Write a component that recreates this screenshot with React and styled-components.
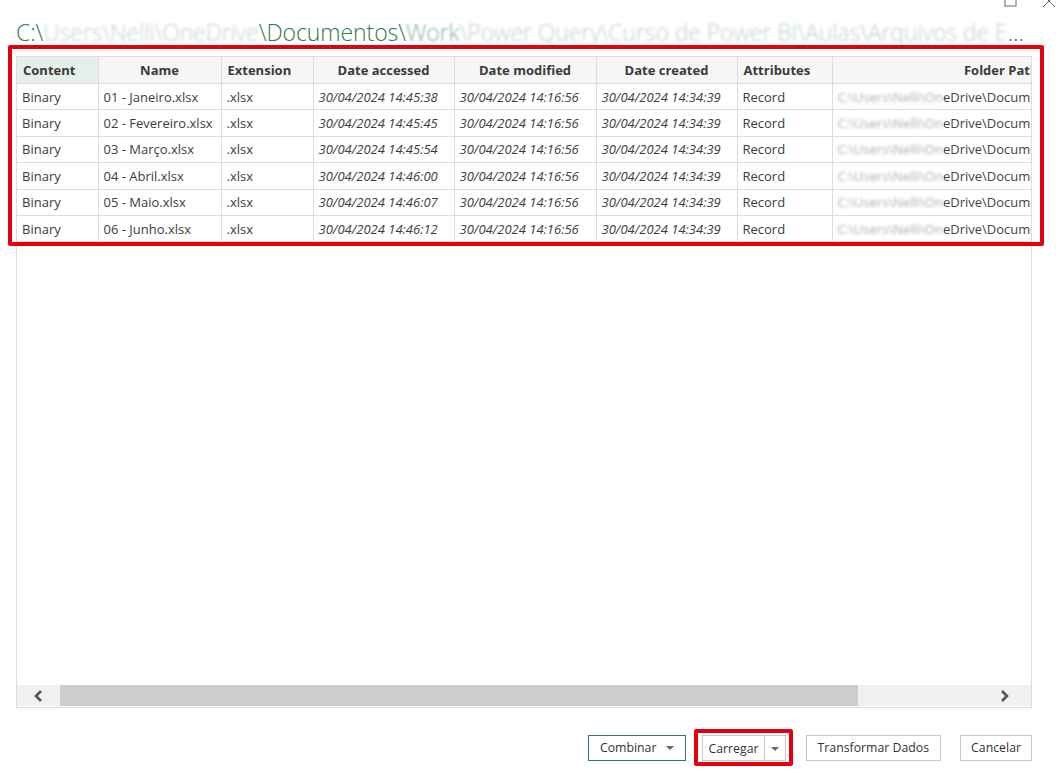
import React from "react";
import styled, { createGlobalStyle } from "styled-components";

const GlobalStyle = createGlobalStyle`
  html, body {
    margin: 0;
    padding: 0;
    background: #ffffff;
  }
  body {
    font-family: "Open Sans", "Noto Sans", "Liberation Sans", sans-serif;
    color: #333;
  }
`;

const Window = styled.div`
  position: relative;
  width: 1060px;
  height: 769px;
  overflow: hidden;
  background: #fff;
  display: flex;
  flex-direction: column;
  padding: 0 28px 0 16px;
  box-sizing: border-box;
`;

const WindowControls = styled.div`
  position: absolute;
  top: -6px;
  right: 4px;
  display: flex;
  gap: 24px;
  align-items: center;
`;

const Title = styled.div`
  margin-top: 16px;
  height: 34px;
  font-size: 23px;
  font-weight: 300;
  color: #2f7a50;
  white-space: nowrap;
  overflow: hidden;
  text-overflow: ellipsis;
  width: 1014px;
  letter-spacing: -0.1px;
`;

const Blur = styled.span`
  filter: blur(${(p) => p.$amount || 1.6}px);
  opacity: ${(p) => p.$fade || 0.35};
`;

const Preview = styled.div`
  margin-top: 6px;
  height: 652px;
  width: 1016px;
  border: 1px solid #dedede;
  border-top: none;
  box-sizing: border-box;
  display: flex;
  flex-direction: column;
  position: relative;
`;

const TableViewport = styled.div`
  flex: 1;
  overflow: hidden;
`;

const Table = styled.table`
  border-collapse: collapse;
  table-layout: fixed;
  width: 1100px;
  font-size: 13px;
`;

const HeadCell = styled.th`
  height: 26px;
  padding: 0 6px;
  border: 1px solid #dcdcdc;
  border-left: ${(p) => (p.$first ? "none" : "1px solid #dcdcdc")};
  background: ${(p) => (p.$selected ? "#e6efe9" : "#f6f6f6")};
  font-weight: 700;
  color: #3a3a3a;
  text-align: ${(p) => p.$align || "center"};
  padding-right: ${(p) => p.$padRight || 6}px;
  white-space: nowrap;
  overflow: hidden;
`;

const Cell = styled.td`
  height: 25.4px;
  padding: 0 5px;
  border: 1px solid #dcdcdc;
  border-left: ${(p) => (p.$first ? "none" : "1px solid #dcdcdc")};
  color: #3c3c3c;
  font-style: ${(p) => (p.$italic ? "italic" : "normal")};
  white-space: nowrap;
  overflow: hidden;
  text-align: ${(p) => p.$align || "left"};
`;

const PathText = styled.span`
  color: #444;
`;

const Highlight = styled.div`
  position: absolute;
  left: -9px;
  top: -11px;
  width: 1036px;
  height: 201px;
  border: 4px solid #e3000f;
  border-radius: 2px;
  box-sizing: border-box;
  pointer-events: none;
`;

const ScrollBar = styled.div`
  height: 21px;
  margin-bottom: 1px;
  display: flex;
  align-items: stretch;
  background: #f0f0f0;
`;

const ScrollArrow = styled.div`
  width: ${(p) => p.$w}px;
  display: flex;
  align-items: center;
  justify-content: center;
  color: #555;
`;

const Thumb = styled.div`
  width: 798px;
  background: #cdcdcd;
`;

const Track = styled.div`
  flex: 1;
`;

const Footer = styled.div`
  display: flex;
  justify-content: flex-end;
  align-items: center;
  gap: 19px;
  width: 1016px;
  margin-top: 21px;
`;

const Button = styled.button`
  height: 26px;
  padding: 0 ${(p) => p.$pad || 11}px;
  background: #fff;
  border: 1px solid ${(p) => (p.$primary ? "#2e7d52" : "#c8c8c8")};
  font-family: inherit;
  font-size: 12.3px;
  color: #333;
  display: flex;
  align-items: center;
  gap: 10px;
  cursor: pointer;
`;

const Caret = styled.span`
  width: 0;
  height: 0;
  border-left: 4px solid transparent;
  border-right: 4px solid transparent;
  border-top: 4px solid #666;
  margin-top: 1px;
`;

const SplitButton = styled.div`
  display: flex;
  height: 26px;
  border: 1px solid #c8c8c8;
  box-sizing: border-box;
`;

const SplitMain = styled.div`
  padding: 0 5px;
  display: flex;
  align-items: center;
  font-size: 12.3px;
  border-right: 1px solid #c8c8c8;
`;

const SplitArrow = styled.div`
  width: 20px;
  display: flex;
  align-items: center;
  justify-content: center;
`;

const CalloutBox = styled.div`
  border: 4px solid #e3000f;
  border-radius: 2px;
  padding: 2px 3px 1px 4px;
  margin-left: -11px;
  margin-right: -6px;
`;

const columns = [
  { key: "content", label: "Content", width: 81, align: "left", selected: true },
  { key: "name", label: "Name", width: 123 },
  { key: "ext", label: "Extension", width: 92, align: "left" },
  { key: "acc", label: "Date accessed", width: 141 },
  { key: "mod", label: "Date modified", width: 142 },
  { key: "cre", label: "Date created", width: 141 },
  { key: "attr", label: "Attributes", width: 95, align: "left" },
  { key: "path", label: "Folder Path", width: 285, align: "right", padRight: 78 },
];

const rows = [
  ["01 - Janeiro.xlsx", "14:45:38"],
  ["02 - Fevereiro.xlsx", "14:45:45"],
  ["03 - Março.xlsx", "14:45:54"],
  ["04 - Abril.xlsx", "14:46:00"],
  ["05 - Maio.xlsx", "14:46:07"],
  ["06 - Junho.xlsx", "14:46:12"],
];

function Chevron({ dir }) {
  return (
    <svg width="14" height="14" viewBox="0 0 14 14">
      <path
        d={dir === "left" ? "M9 2 L4 7 L9 12" : "M5 2 L10 7 L5 12"}
        fill="none"
        stroke="#555"
        strokeWidth="2.6"
      />
    </svg>
  );
}

export default function App() {
  return (
    <>
      <GlobalStyle />
      <Window>
        <WindowControls>
          <svg width="14" height="14" viewBox="0 0 14 14">
            <rect x="1" y="1" width="11" height="11" fill="none" stroke="#666" strokeWidth="1" />
          </svg>
          <svg width="14" height="14" viewBox="0 0 14 14">
            <path d="M1 1 L13 13 M13 1 L1 13" stroke="#666" strokeWidth="1" />
          </svg>
        </WindowControls>

        <Title>
          C:\<Blur>Users\Nelli\OneDrive</Blur>\Documentos\<Blur $fade={0.6} $amount={1}>Work</Blur>
          <Blur>\Power Query\Curso de Power BI\Aulas\Arquivos de Exemplo\Pasta Mod</Blur>o...
        </Title>

        <Preview>
          <Highlight />
          <TableViewport>
            <Table>
              <colgroup>
                {columns.map((c) => (
                  <col key={c.key} style={{ width: c.width }} />
                ))}
              </colgroup>
              <thead>
                <tr>
                  {columns.map((c, i) => (
                    <HeadCell
                      key={c.key}
                      $first={i === 0}
                      $align={c.align}
                      $selected={c.selected}
                      $padRight={c.padRight}
                    >
                      {c.label}
                    </HeadCell>
                  ))}
                </tr>
              </thead>
              <tbody>
                {rows.map(([name, time]) => (
                  <tr key={name}>
                    <Cell $first>Binary</Cell>
                    <Cell>{name}</Cell>
                    <Cell>.xlsx</Cell>
                    <Cell $italic>30/04/2024 {time}</Cell>
                    <Cell $italic>30/04/2024 14:16:56</Cell>
                    <Cell $italic>30/04/2024 14:34:39</Cell>
                    <Cell>Record</Cell>
                    <Cell>
                      <PathText>
                        <Blur $fade={0.45}>C:\Users\Nelli\On</Blur>eDrive\Documentos\Work
                      </PathText>
                    </Cell>
                  </tr>
                ))}
              </tbody>
            </Table>
          </TableViewport>
          <ScrollBar>
            <ScrollArrow $w={43}>
              <Chevron dir="left" />
            </ScrollArrow>
            <Thumb />
            <Track />
            <ScrollArrow $w={55}>
              <Chevron dir="right" />
            </ScrollArrow>
          </ScrollBar>
        </Preview>

        <Footer>
          <Button $primary>
            Combinar <Caret />
          </Button>
          <CalloutBox>
            <SplitButton>
              <SplitMain>Carregar</SplitMain>
              <SplitArrow>
                <Caret />
              </SplitArrow>
            </SplitButton>
          </CalloutBox>
          <Button>Transformar Dados</Button>
          <Button $pad={10}>Cancelar</Button>
        </Footer>
      </Window>
    </>
  );
}
